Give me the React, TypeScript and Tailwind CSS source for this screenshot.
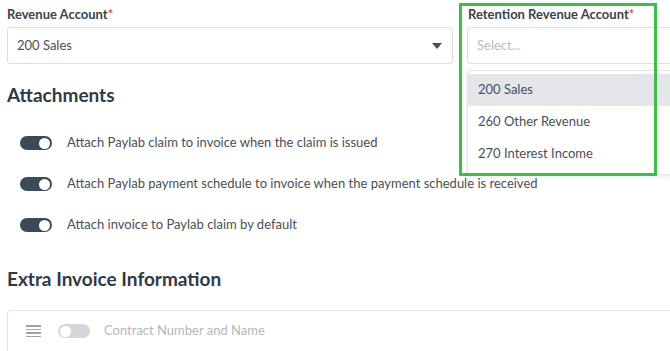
import React from 'react';

const attachments = [
  'Attach Paylab claim to invoice when the claim is issued',
  'Attach Paylab payment schedule to invoice when the payment schedule is received',
  'Attach invoice to Paylab claim by default',
];

const accounts = ['200 Sales', '260 Other Revenue', '270 Interest Income'];

const Toggle: React.FC<{ on?: boolean }> = ({ on }) => (
  <div
    className={
      on
        ? 'w-[32px] h-[14px] rounded-full bg-[#3c4956] flex items-center justify-end px-[2px]'
        : 'w-[32px] h-[14px] rounded-full bg-[#d3d6da] flex items-center justify-start px-[2px]'
    }
  >
    <div className="w-[11px] h-[11px] rounded-full bg-white" />
  </div>
);

export default function App() {
  return (
    <div
      className="relative w-[670px] h-[351px] overflow-hidden bg-white text-[#4a4f55]"
      style={{ fontFamily: 'Lato, "Open Sans", sans-serif' }}
    >
      <div className="w-[920px] pl-[7px]">
        {/* account selects */}
        <div className="grid grid-cols-[446px_446px] gap-[14px] pt-[5px]">
          <div>
            <div className="text-[13px] font-bold text-[#3b434b] leading-[18px]">
              Revenue Account<span className="text-[#d9534f]">*</span>
            </div>
            <div className="mt-[4px] h-[37px] border border-[#dcdfe2] rounded-[3px] flex items-center justify-between pl-[9px] pr-[10px]">
              <span className="text-[13px]">200 Sales</span>
              <svg width="10" height="6" viewBox="0 0 10 6">
                <path d="M0 0h10L5 6z" fill="#4a4f55" />
              </svg>
            </div>
          </div>
          <div className="relative">
            <div className="text-[13px] font-bold text-[#3b434b] leading-[18px] pl-[1px]">
              Retention Revenue Account<span className="text-[#d9534f]">*</span>
            </div>
            <div className="mt-[4px] h-[37px] border border-[#dcdfe2] rounded-[3px] flex items-center pl-[9px]">
              <span className="text-[13px] text-[#b8bcc1]">Select...</span>
            </div>
            {/* open menu */}
            <div className="absolute left-0 right-0 top-[65px] bg-white border border-[#e3e5e8] rounded-[3px] shadow-[0_2px_5px_rgba(0,0,0,0.07)] pt-[3px] pb-[4px] z-10">
              {accounts.map((a, i) => (
                <div
                  key={a}
                  className={
                    i === 0
                      ? 'h-[32px] flex items-center pl-[10px] text-[13px] bg-[#e4e6e9]'
                      : 'h-[32px] flex items-center pl-[10px] text-[13px]'
                  }
                >
                  {a}
                </div>
              ))}
            </div>
          </div>
        </div>

        {/* Attachments */}
        <h2 className="mt-[18px] text-[19px] font-bold text-[#2f3a44] leading-[26px]">Attachments</h2>
        <div className="mt-[28px] pl-[13px] flex flex-col gap-[27px]">
          {attachments.map((t) => (
            <div key={t} className="flex items-center gap-[15px] h-[14px]">
              <Toggle on />
              <span className="text-[13px]">{t}</span>
            </div>
          ))}
        </div>

        {/* Extra info */}
        <h2 className="mt-[34px] text-[19px] font-bold text-[#2f3a44] leading-[26px]">Extra Invoice Information</h2>
        <div className="mt-[18px] w-[700px] h-[60px] border border-[#e1e3e6] rounded-[4px] flex items-start pt-[13px] pl-[18px]">
          <div className="flex items-center h-[14px]">
            <div className="flex flex-col gap-[2px] w-[15px]">
              <div className="h-[1.5px] bg-[#9ea3a8]" />
              <div className="h-[1.5px] bg-[#9ea3a8]" />
              <div className="h-[1.5px] bg-[#9ea3a8]" />
              <div className="h-[1.5px] bg-[#9ea3a8]" />
            </div>
            <div className="ml-[17px]">
              <Toggle />
            </div>
            <span className="ml-[14px] text-[13px] text-[#b3b7bc]">Contract Number and Name</span>
          </div>
        </div>
      </div>

      {/* highlight annotation */}
      <div className="absolute left-[459px] top-[3px] w-[198px] h-[173px] border-[3px] border-[#3fbd4c] z-20 pointer-events-none" />
    </div>
  );
}
